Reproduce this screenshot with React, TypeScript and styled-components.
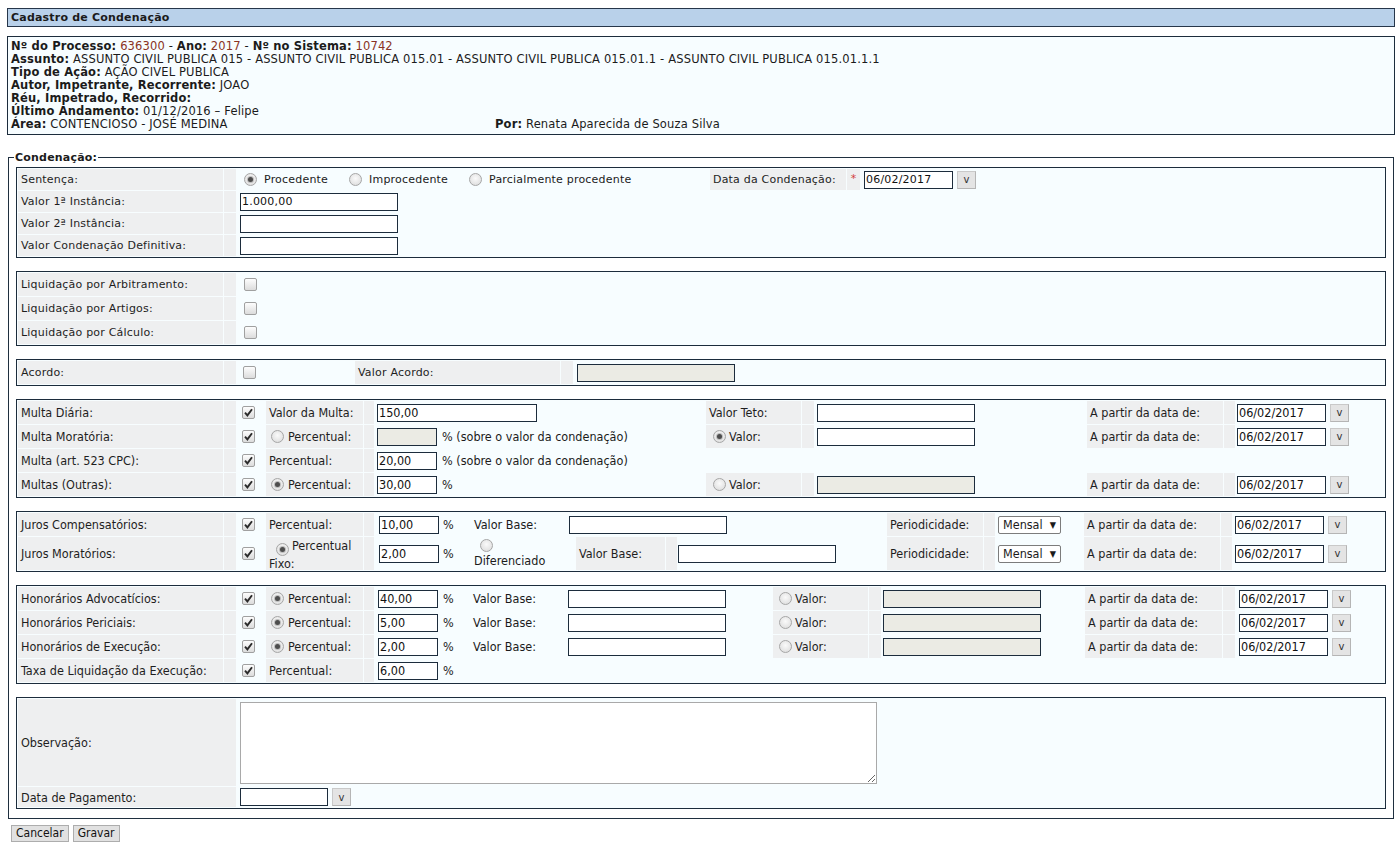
import React from "react";
import styled, { createGlobalStyle, css } from "styled-components";

const GlobalStyle = createGlobalStyle`
  html, body {
    margin: 0;
    padding: 0;
    background: #ffffff;
  }
  body {
    font-family: "DejaVu Sans", Verdana, sans-serif;
    font-size: 11px;
    letter-spacing: 0.2px;
    color: #1b1b1b;
  }
  * {
    box-sizing: border-box;
  }
`;

const narrowFont = css`
  font-family: "DejaVu Sans Condensed", "Liberation Sans", Arial, sans-serif;
  font-size: 12.5px;
  letter-spacing: normal;
`;

const Page = styled.div`
  padding: 8px 0 0 7px;
  width: 1399px;
`;

const TitleBar = styled.div`
  width: 1388px;
  height: 19px;
  background: #b9d1ea;
  border: 1px solid #26364a;
  font-weight: bold;
  line-height: 17px;
  padding-left: 3px;
`;

const InfoBox = styled.div`
  margin-top: 9px;
  width: 1388px;
  border: 1px solid #1c2c3c;
  background: #f7fdff;
  padding: 3px;
  font-size: 11.5px;
  letter-spacing: 0.15px;
  line-height: 13px;
`;

const InfoLine = styled.div`
  display: flex;
  white-space: nowrap;
`;

const InfoLeft = styled.span`
  width: 484px;
`;

const Num = styled.span`
  color: #8a3324;
`;

const Fieldset = styled.fieldset`
  margin: 16px 0 0 1px;
  width: 1386px;
  border: 1px solid #1f2f3f;
  padding: 3px 7px 9px 7px;
  min-inline-size: auto;
`;

const Legend = styled.legend`
  font-weight: bold;
  padding: 0 1px;
  margin-left: -2px;
  color: #1b1b1b;
`;

const Panel = styled.div<{ $narrow?: boolean }>`
  display: flex;
  flex-direction: column;
  gap: 1px;
  padding: 1px;
  border: 1px solid #1c2c3c;
  background: #f7fdff;
  & + & {
    margin-top: 13px;
  }
  ${(p) => p.$narrow && narrowFont}
`;

const Row = styled.div<{ $h?: number }>`
  display: flex;
  gap: 1px;
  height: ${(p) => p.$h ?? 23}px;
`;

const Label = styled.div<{ $w: number; $wrap?: boolean }>`
  flex: 0 0 ${(p) => p.$w}px;
  background: #eeeff0;
  padding-left: 3px;
  color: #1e1e1e;
  ${(p) =>
    p.$wrap
      ? css`
          display: block;
          padding-top: 1px;
          line-height: 15px;
        `
      : css`
          display: flex;
          align-items: center;
          white-space: nowrap;
        `}
`;

const Spacer = styled.div<{ $w?: number }>`
  flex: 0 0 ${(p) => p.$w ?? 12}px;
  background: #eeeff0;
  display: flex;
  justify-content: center;
  padding-top: 3px;
`;

const Required = styled.span`
  color: #d23c3c;
  font-size: 11px;
`;

const Cell = styled.div<{ $w?: number; $pl?: number }>`
  ${(p) => (p.$w ? `flex: 0 0 ${p.$w}px;` : "flex: 1 1 auto;")}
  display: flex;
  align-items: center;
  padding-left: ${(p) => p.$pl ?? 2}px;
  white-space: nowrap;
`;

const StackCell = styled.div<{ $w: number }>`
  flex: 0 0 ${(p) => p.$w}px;
  display: flex;
  flex-direction: column;
  justify-content: center;
  align-items: flex-start;
  padding-left: 3px;
  gap: 1px;
  & > span:first-child {
    margin-left: 6px;
  }
`;

const TextInput = styled.input<{ $w: number }>`
  width: ${(p) => p.$w}px;
  height: 18px;
  margin: 0;
  border: 1px solid #1c2c3c;
  background: #ffffff;
  padding: 0 1px;
  font: inherit;
  letter-spacing: inherit;
  color: #111;
  outline: none;
  &:disabled {
    background: #ebebe4;
  }
`;

const Suffix = styled.span`
  margin-left: 5px;
`;

const CalButton = styled.span`
  margin-left: 4px;
  width: 19px;
  height: 18px;
  background: #e4e4e4;
  border: 1px solid #c9c9c9;
  border-right-color: #b5b5b5;
  border-bottom-color: #b5b5b5;
  display: inline-flex;
  align-items: center;
  justify-content: center;
  font-family: "DejaVu Sans", Verdana, sans-serif;
  font-size: 10px;
  letter-spacing: normal;
  color: #333;
`;

const Box = styled.span<{ $ml?: number }>`
  flex: none;
  width: 13px;
  height: 13px;
  margin-left: ${(p) => p.$ml ?? 0}px;
  border: 1px solid #a0a0a0;
  border-radius: 2px;
  background: linear-gradient(#fdfdfd, #dcdcdc);
  display: inline-flex;
  align-items: center;
  justify-content: center;
`;

const Round = styled.span<{ $on?: boolean; $ml?: number; $mr?: number }>`
  flex: none;
  display: inline-flex;
  vertical-align: -2px;
  align-items: center;
  justify-content: center;
  width: 13px;
  height: 13px;
  margin-left: ${(p) => p.$ml ?? 0}px;
  margin-right: ${(p) => p.$mr ?? 0}px;
  border-radius: 50%;
  border: 1px solid #a6a6a6;
  background: radial-gradient(circle at 50% 40%, #fafafa, #d9d9d9);
  &::after {
    content: "";
    display: ${(p) => (p.$on ? "block" : "none")};
    width: 5px;
    height: 5px;
    border-radius: 50%;
    background: #4d4d4d;
    box-shadow: 0 0 0 1px #bdbdbd;
  }
`;

const Option = styled.span`
  display: inline-flex;
  align-items: center;
  margin-right: 21px;
  & > span:first-child {
    margin-right: 7px;
  }
`;

const SelectBox = styled.span`
  width: 63px;
  height: 18px;
  border: 1px solid #7c7c7c;
  border-radius: 2px;
  background: #fff;
  display: inline-flex;
  align-items: center;
  justify-content: space-between;
  padding: 0 4px 0 4px;
  & > i {
    font-style: normal;
    font-size: 9px;
  }
`;

const Notes = styled.textarea`
  width: 637px;
  height: 82px;
  margin: 0;
  border: 1px solid #a9a9a9;
  background: #fff;
  resize: both;
  font: inherit;
`;

const Actions = styled.div`
  display: flex;
  gap: 4px;
  margin: 6px 0 0 4px;
`;

const ActionButton = styled.button`
  ${narrowFont}
  font-size: 12px;
  height: 17px;
  padding: 0 4px;
  margin: 0;
  background: #e1e1e1;
  border: 1px solid #adadad;
  color: #111;
  line-height: 15px;
`;

function Checkbox({ on, ml }: { on?: boolean; ml?: number }) {
  return (
    <Box $ml={ml}>
      {on && (
        <svg width="9" height="9" viewBox="0 0 9 9">
          <path d="M1 4.6 L3.4 7.4 L8 1.2" stroke="#2b2b2b" strokeWidth="1.9" fill="none" />
        </svg>
      )}
    </Box>
  );
}

function DateField({ value, w = 89 }: { value: string; w?: number }) {
  return (
    <>
      <TextInput $w={w} defaultValue={value} />
      <CalButton>v</CalButton>
    </>
  );
}

function Mensal() {
  return (
    <SelectBox>
      Mensal <i>▼</i>
    </SelectBox>
  );
}

const DATE = "06/02/2017";

export default function App() {
  return (
    <>
      <GlobalStyle />
      <Page>
        <TitleBar>Cadastro de Condenação</TitleBar>

        <InfoBox>
          <InfoLine>
            <b>Nº do Processo:</b>&nbsp;<Num>636300</Num>&nbsp;-&nbsp;<b>Ano:</b>&nbsp;<Num>2017</Num>&nbsp;-&nbsp;
            <b>Nº no Sistema:</b>&nbsp;<Num>10742</Num>
          </InfoLine>
          <InfoLine>
            <b>Assunto:</b>&nbsp;ASSUNTO CIVIL PUBLICA 015 - ASSUNTO CIVIL PUBLICA 015.01 - ASSUNTO CIVIL PUBLICA
            015.01.1 - ASSUNTO CIVIL PUBLICA 015.01.1.1
          </InfoLine>
          <InfoLine>
            <b>Tipo de Ação:</b>&nbsp;AÇÃO CIVEL PUBLICA
          </InfoLine>
          <InfoLine>
            <b>Autor, Impetrante, Recorrente:</b>&nbsp;JOAO
          </InfoLine>
          <InfoLine>
            <b>Réu, Impetrado, Recorrido:</b>
          </InfoLine>
          <InfoLine>
            <b>Último Andamento:</b>&nbsp;01/12/2016 – Felipe
          </InfoLine>
          <InfoLine>
            <InfoLeft>
              <b>Área:</b> CONTENCIOSO - JOSÉ MEDINA
            </InfoLeft>
            <span>
              <b>Por:</b> Renata Aparecida de Souza Silva
            </span>
          </InfoLine>
        </InfoBox>

        <Fieldset>
          <Legend>Condenação:</Legend>

          <Panel>
            <Row $h={21}>
              <Label $w={205}>Sentença:</Label>
              <Spacer />
              <Cell $w={472} $pl={7}>
                <Option>
                  <Round $on />
                  Procedente
                </Option>
                <Option>
                  <Round />
                  Improcedente
                </Option>
                <Option>
                  <Round />
                  Parcialmente procedente
                </Option>
              </Cell>
              <Label $w={136}>Data da Condenação:</Label>
              <Spacer $w={13}>
                <Required>*</Required>
              </Spacer>
              <Cell $pl={3}>
                <DateField value={DATE} />
              </Cell>
            </Row>
            <Row $h={21}>
              <Label $w={205}>Valor 1ª Instância:</Label>
              <Spacer />
              <Cell $pl={3}>
                <TextInput $w={158} defaultValue="1.000,00" />
              </Cell>
            </Row>
            <Row $h={21}>
              <Label $w={205}>Valor 2ª Instância:</Label>
              <Spacer />
              <Cell $pl={3}>
                <TextInput $w={158} />
              </Cell>
            </Row>
            <Row $h={21}>
              <Label $w={205}>Valor Condenação Definitiva:</Label>
              <Spacer />
              <Cell $pl={3}>
                <TextInput $w={158} />
              </Cell>
            </Row>
          </Panel>

          <Panel>
            {["Liquidação por Arbitramento:", "Liquidação por Artigos:", "Liquidação por Cálculo:"].map((t) => (
              <Row key={t}>
                <Label $w={205}>{t}</Label>
                <Spacer />
                <Cell $pl={7}>
                  <Checkbox />
                </Cell>
              </Row>
            ))}
          </Panel>

          <Panel>
            <Row>
              <Label $w={205}>Acordo:</Label>
              <Spacer />
              <Cell $w={117} $pl={6}>
                <Checkbox />
              </Cell>
              <Label $w={205}>Valor Acordo:</Label>
              <Spacer />
              <Cell $pl={3}>
                <TextInput $w={158} disabled />
              </Cell>
            </Row>
          </Panel>

          <Panel $narrow>
            <Row>
              <Label $w={205}>Multa Diária:</Label>
              <Spacer />
              <Cell $w={28} $pl={5}>
                <Checkbox on />
              </Cell>
              <Label $w={97}>Valor da Multa:</Label>
              <Spacer $w={10} />
              <Cell $w={330}>
                <TextInput $w={160} defaultValue="150,00" />
              </Cell>
              <Label $w={95}>Valor Teto:</Label>
              <Spacer />
              <Cell $w={271}>
                <TextInput $w={158} />
              </Cell>
              <Label $w={136}>A partir da data de:</Label>
              <Spacer $w={11} />
              <Cell $pl={1}>
                <DateField value={DATE} />
              </Cell>
            </Row>
            <Row>
              <Label $w={205}>Multa Moratória:</Label>
              <Spacer />
              <Cell $w={28} $pl={5}>
                <Checkbox on />
              </Cell>
              <Label $w={97}>
                <Round $ml={2} $mr={4} />
                Percentual:
              </Label>
              <Spacer $w={10} />
              <Cell $w={330}>
                <TextInput $w={60} disabled />
                <Suffix>% (sobre o valor da condenação)</Suffix>
              </Cell>
              <Label $w={95}>
                <Round $on $ml={4} $mr={3} />
                Valor:
              </Label>
              <Spacer />
              <Cell $w={271}>
                <TextInput $w={158} />
              </Cell>
              <Label $w={136}>A partir da data de:</Label>
              <Spacer $w={11} />
              <Cell $pl={1}>
                <DateField value={DATE} />
              </Cell>
            </Row>
            <Row>
              <Label $w={205}>Multa (art. 523 CPC):</Label>
              <Spacer />
              <Cell $w={28} $pl={5}>
                <Checkbox on />
              </Cell>
              <Label $w={97}>Percentual:</Label>
              <Spacer $w={10} />
              <Cell>
                <TextInput $w={60} defaultValue="20,00" />
                <Suffix>% (sobre o valor da condenação)</Suffix>
              </Cell>
            </Row>
            <Row>
              <Label $w={205}>Multas (Outras):</Label>
              <Spacer />
              <Cell $w={28} $pl={5}>
                <Checkbox on />
              </Cell>
              <Label $w={97}>
                <Round $on $ml={2} $mr={4} />
                Percentual:
              </Label>
              <Spacer $w={10} />
              <Cell $w={330}>
                <TextInput $w={60} defaultValue="30,00" />
                <Suffix>%</Suffix>
              </Cell>
              <Label $w={95}>
                <Round $ml={4} $mr={3} />
                Valor:
              </Label>
              <Spacer />
              <Cell $w={271}>
                <TextInput $w={158} disabled />
              </Cell>
              <Label $w={136}>A partir da data de:</Label>
              <Spacer $w={11} />
              <Cell $pl={1}>
                <DateField value={DATE} />
              </Cell>
            </Row>
          </Panel>

          <Panel $narrow>
            <Row>
              <Label $w={205}>Juros Compensatórios:</Label>
              <Spacer />
              <Cell $w={28} $pl={5}>
                <Checkbox on />
              </Cell>
              <Label $w={97}>Percentual:</Label>
              <Spacer $w={10} />
              <Cell $w={64} $pl={4}>
                <TextInput $w={60} defaultValue="10,00" />
              </Cell>
              <Cell $w={30} $pl={3}>
                %
              </Cell>
              <Cell $w={95} $pl={3}>
                Valor Base:
              </Cell>
              <Cell $w={319}>
                <TextInput $w={158} />
              </Cell>
              <Label $w={96}>Periodicidade:</Label>
              <Spacer $w={11} />
              <Cell $w={87}>
                <Mensal />
              </Cell>
              <Label $w={136}>A partir da data de:</Label>
              <Spacer $w={11} />
              <Cell>
                <DateField value={DATE} />
              </Cell>
            </Row>
            <Row $h={33}>
              <Label $w={205}>Juros Moratórios:</Label>
              <Spacer />
              <Cell $w={28} $pl={5}>
                <Checkbox on />
              </Cell>
              <Label $w={97} $wrap>
                <Round $on $ml={7} $mr={3} />
                Percentual Fixo:
              </Label>
              <Spacer $w={10} />
              <Cell $w={64} $pl={4}>
                <TextInput $w={60} defaultValue="2,00" />
              </Cell>
              <Cell $w={30} $pl={3}>
                %
              </Cell>
              <StackCell $w={104}>
                <Round />
                <span>Diferenciado</span>
              </StackCell>
              <Label $w={89}>Valor Base:</Label>
              <Spacer $w={11} />
              <Cell $w={208} $pl={0}>
                <TextInput $w={158} />
              </Cell>
              <Label $w={96}>Periodicidade:</Label>
              <Spacer $w={11} />
              <Cell $w={87}>
                <Mensal />
              </Cell>
              <Label $w={136}>A partir da data de:</Label>
              <Spacer $w={11} />
              <Cell>
                <DateField value={DATE} />
              </Cell>
            </Row>
          </Panel>

          <Panel $narrow>
            {[
              ["Honorários Advocatícios:", "40,00"],
              ["Honorários Periciais:", "5,00"],
              ["Honorários de Execução:", "2,00"],
            ].map(([t, v]) => (
              <Row key={t}>
                <Label $w={205}>{t}</Label>
                <Spacer />
                <Cell $w={28} $pl={5}>
                  <Checkbox on />
                </Cell>
                <Label $w={97}>
                  <Round $on $ml={2} $mr={4} />
                  Percentual:
                </Label>
                <Spacer $w={10} />
                <Cell $w={64} $pl={3}>
                  <TextInput $w={60} defaultValue={v} />
                </Cell>
                <Cell $w={30} $pl={3}>
                  %
                </Cell>
                <Cell $w={95} $pl={2}>
                  Valor Base:
                </Cell>
                <Cell $w={205} $pl={1}>
                  <TextInput $w={158} />
                </Cell>
                <Label $w={95}>
                  <Round $ml={3} $mr={3} />
                  Valor:
                </Label>
                <Spacer />
                <Cell $w={202} $pl={1}>
                  <TextInput $w={158} disabled />
                </Cell>
                <Label $w={137}>A partir da data de:</Label>
                <Spacer />
                <Cell $pl={3}>
                  <DateField value={DATE} />
                </Cell>
              </Row>
            ))}
            <Row>
              <Label $w={205}>Taxa de Liquidação da Execução:</Label>
              <Spacer />
              <Cell $w={28} $pl={5}>
                <Checkbox on />
              </Cell>
              <Label $w={97}>Percentual:</Label>
              <Spacer $w={10} />
              <Cell $w={64} $pl={3}>
                <TextInput $w={60} defaultValue="6,00" />
              </Cell>
              <Cell $w={30} $pl={3}>
                %
              </Cell>
              <Cell />
            </Row>
          </Panel>

          <Panel $narrow>
            <Row $h={87}>
              <Label $w={218}>Observação:</Label>
              <Cell $pl={3}>
                <Notes />
              </Cell>
            </Row>
            <Row $h={20}>
              <Label $w={218}>Data de Pagamento:</Label>
              <Cell $pl={3}>
                <DateField value="" w={88} />
              </Cell>
            </Row>
          </Panel>
        </Fieldset>

        <Actions>
          <ActionButton>Cancelar</ActionButton>
          <ActionButton>Gravar</ActionButton>
        </Actions>
      </Page>
    </>
  );
}
